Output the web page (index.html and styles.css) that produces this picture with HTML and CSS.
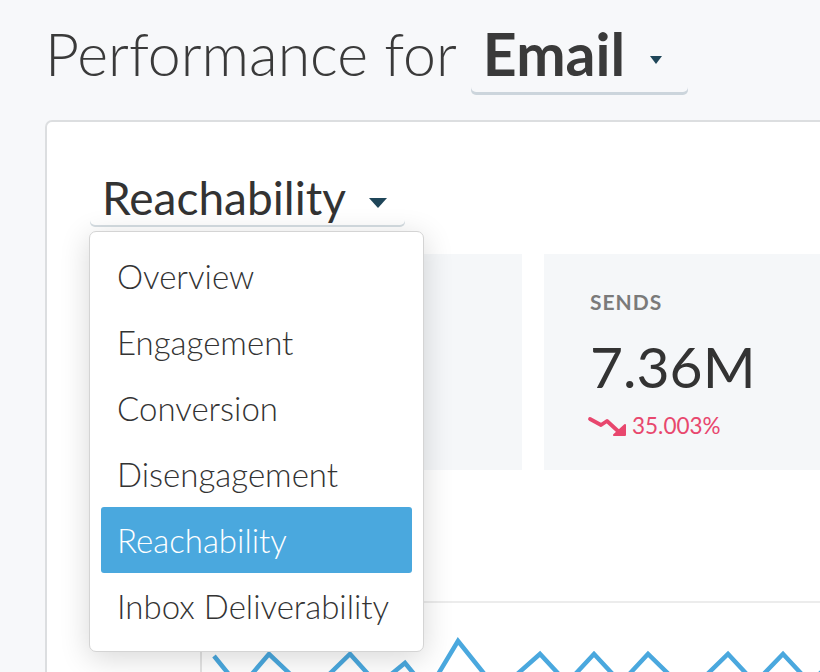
FILE: index.html
```html
<!DOCTYPE html>
<html lang="en">
<head>
  <meta charset="UTF-8">
  <title>Performance for Email</title>
  <link rel="stylesheet" href="styles.css">
</head>
<body>
  <div class="page">

    <h1 class="title">
      <span>Performance for</span>
      <span class="select select-big">Email <i class="caret"></i></span>
    </h1>

    <div class="card">
      <div class="card-head">
        <span class="select select-mid">Reachability <i class="caret caret-mid"></i></span>

        <ul class="menu">
          <li>Overview</li>
          <li>Engagement</li>
          <li>Conversion</li>
          <li>Disengagement</li>
          <li class="active">Reachability</li>
          <li>Inbox Deliverability</li>
        </ul>
      </div>

      <div class="stats">
        <div class="stat"></div>
        <div class="stat">
          <div class="stat-label">SENDS</div>
          <div class="stat-value">7.36M</div>
          <div class="stat-change">
            <svg width="40" height="24" viewBox="0 0 40 24">
              <path d="M3 5 L14 11 L20 7 L32 18" fill="none" stroke="#e8476e" stroke-width="3.8" stroke-linecap="round" stroke-linejoin="round"/>
              <path d="M27 21 L38 21 L38 11 Z" fill="#e8476e" stroke="#e8476e" stroke-width="2" stroke-linejoin="round"/>
            </svg>
            35.003%
          </div>
        </div>
      </div>

      <div class="chart">
        <svg width="640" height="80" viewBox="0 0 640 80">
          <polyline points="12,53 38,85 67,51 108,90 148,51 176,82 203,60 226,88 256,38 296,88 338,51 365,80 392,51 419,80 446,51 486,90 526,51 553,80 581,51 608,80 636,53"
                    fill="none" stroke="#4aa8de" stroke-width="4.5"/>
        </svg>
      </div>
    </div>

  </div>
</body>
</html>
```

FILE: styles.css
```css
body {
  margin: 0;
  background: #f7f8fa;
  color: #333;
  font-family: Lato, 'Open Sans', sans-serif;
  overflow: hidden;
}

.page {
  padding: 16px 0 0 45px;
}

/* cabeçalho */
.title {
  margin: 0;
  display: flex;
  align-items: baseline;
  font-size: 59px;
  font-weight: 300;
  line-height: 70px;
  color: #3a3a3a;
}

.select {
  display: inline-flex;
  align-items: center;
  border-radius: 5px;
  box-shadow: 0 3px 0 #ccd5dc;
}

.select-big {
  margin-left: 14px;
  padding: 0 26px 0 12px;
  font-weight: 700;
  height: 76px;
}

.caret {
  display: inline-block;
  margin-left: 25px;
  margin-top: 12px;
  border-left: 6px solid transparent;
  border-right: 6px solid transparent;
  border-top: 8px solid #1f4659;
}

/* card */
.card {
  margin-top: 28px;
  width: 900px;
  height: 620px;
  box-sizing: border-box;
  background: #fff;
  border: 2px solid #dcdee0;
  border-radius: 7px;
  padding: 48px 0 0 55px;
  position: relative;
}

.card-head {
  position: relative;
  height: 84px;
}

.select-mid {
  margin-left: -12px;
  padding: 0 18px 0 12px;
  font-size: 46px;
  line-height: 48px;
  font-weight: 400;
  height: 55px;
  box-shadow: 0 2px 0 #d5dde2;
}

.caret-mid {
  margin-left: 23px;
  margin-top: 10px;
  border-left: 9px solid transparent;
  border-right: 9px solid transparent;
  border-top: 10px solid #1f4659;
}

/* menu aberto */
.menu {
  position: absolute;
  left: -13px;
  top: 61px;
  width: 335px;
  margin: 0;
  padding: 11px 11px 12px;
  list-style: none;
  box-sizing: border-box;
  background: #fff;
  border: 1px solid #d4d4d4;
  border-radius: 7px;
  box-shadow: 0 6px 30px rgba(0, 0, 0, 0.16);
  z-index: 2;
}

.menu li {
  height: 66px;
  line-height: 66px;
  padding-left: 16px;
  font-size: 33px;
  font-weight: 300;
  color: #333;
  border-radius: 3px;
}

.menu li.active {
  background: #4aa8de;
  color: #fff;
}

/* estatísticas */
.stats {
  display: flex;
  gap: 22px;
}

.stat {
  flex-shrink: 0;
  width: 420px;
  height: 216px;
  background: #f5f7f9;
  box-sizing: border-box;
  padding: 35px 46px;
}

.stat-label {
  font-size: 21px;
  font-weight: 700;
  color: #7a7a7a;
  letter-spacing: 1px;
}

.stat-value {
  margin-top: 20px;
  font-size: 57px;
  line-height: 64px;
  color: #333;
}

.stat-change {
  display: flex;
  align-items: center;
  gap: 5px;
  margin-top: 14px;
  margin-left: -3px;
  font-size: 22.5px;
  color: #e8476e;
}

/* gráfico */
.chart {
  margin-top: 131px;
  margin-left: 98px;
  border-top: 2px solid #ececec;
  border-left: 2px solid #e4e4e4;
  height: 100px;
}
```
